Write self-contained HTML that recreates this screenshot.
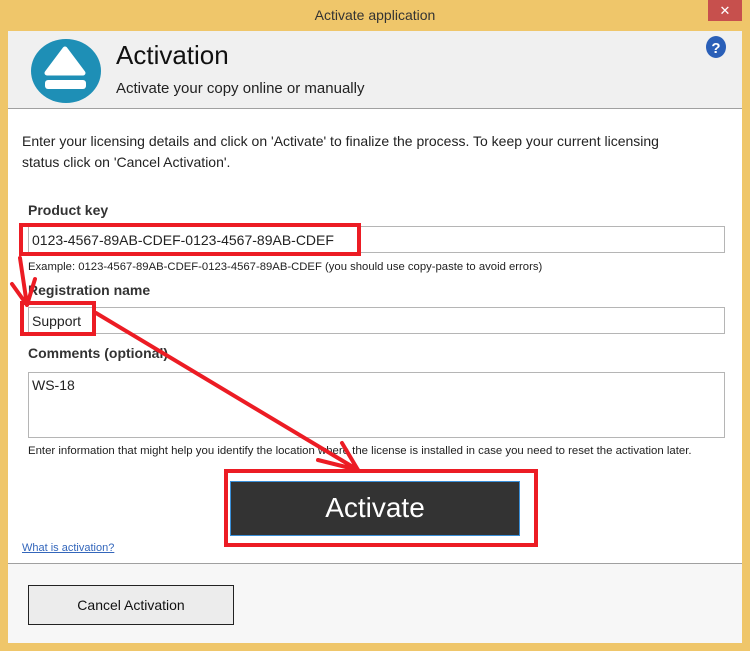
<!DOCTYPE html>
<html><head><style>
*{margin:0;padding:0;box-sizing:border-box}
body{width:750px;height:651px;background:#efc66a;font-family:"Liberation Sans",sans-serif;position:relative;overflow:hidden;color:#222}
.a{position:absolute}
.field{position:absolute;background:#fff;border:1px solid #b5b5b5;font-size:14px;padding-left:3px}
.lbl{position:absolute;font-size:14px;font-weight:bold;color:#333}
.small{position:absolute;font-size:11.3px;color:#222;white-space:nowrap}
.red{position:absolute;border:4px solid #ec1c24}
</style></head><body>
<div class="a" style="left:0;top:0;width:750px;height:30px;text-align:center;line-height:30px;font-size:14px;color:#333">Activate application</div>
<div class="a" style="left:708px;top:0;width:34px;height:21px;background:#c7504d;color:#fff;text-align:center;font-size:13px;line-height:21px">✕</div>
<div class="a" style="left:8px;top:31px;width:734px;height:612px;background:#fff"></div>
<div class="a" style="left:8px;top:31px;width:734px;height:78px;background:#f0f0f0;border-bottom:1px solid #a0a0a0"></div>
<svg class="a" style="left:0;top:30px" width="110" height="80"><ellipse cx="66" cy="41" rx="35" ry="32" fill="#1e8fb6"/><path d="M65 19 L83 43 L47 43 Z" fill="#fff" stroke="#fff" stroke-width="5" stroke-linejoin="round"/><rect x="45" y="50" width="41" height="9" rx="3" fill="#fff"/></svg>
<div class="a" style="left:116px;top:40px;font-size:26px;color:#111">Activation</div>
<div class="a" style="left:116px;top:80px;font-size:15px;color:#222">Activate your copy online or manually</div>
<svg class="a" style="left:705px;top:35px" width="22" height="24"><ellipse cx="11" cy="12" rx="10" ry="11" fill="#2a5fb8"/><text x="11" y="18" text-anchor="middle" font-family="Liberation Sans" font-weight="bold" font-size="15" fill="#fff">?</text></svg>
<div class="a" style="left:22px;top:131px;font-size:14px;line-height:21px;width:650px;color:#222">Enter your licensing details and click on 'Activate' to finalize the process. To keep your current licensing status click on 'Cancel Activation'.</div>
<div class="lbl" style="left:28px;top:202px">Product key</div>
<div class="field" style="left:28px;top:226px;width:697px;height:27px;line-height:26px">0123-4567-89AB-CDEF-0123-4567-89AB-CDEF</div>
<div class="small" style="left:28px;top:261px">Example: 0123-4567-89AB-CDEF-0123-4567-89AB-CDEF (you should use copy-paste to avoid errors)</div>
<div class="lbl" style="left:28px;top:282px">Registration name</div>
<div class="field" style="left:28px;top:307px;width:697px;height:27px;line-height:26px">Support</div>
<div class="lbl" style="left:28px;top:345px">Comments (optional)</div>
<div class="field" style="left:28px;top:372px;width:697px;height:66px;padding-top:4px">WS-18</div>
<div class="small" style="left:28px;top:445px;font-size:11.4px">Enter information that might help you identify the location where the license is installed in case you need to reset the activation later.</div>
<div class="a" style="left:230px;top:481px;width:290px;height:55px;background:#333;border:1px solid #3a8fd8;color:#fff;font-size:28px;text-align:center;line-height:52px">Activate</div>
<div class="a" style="left:22px;top:542px;font-size:11px;color:#3366bb;text-decoration:underline">What is activation?</div>
<div class="a" style="left:8px;top:563px;width:734px;height:80px;background:#f7f7f7;border-top:1px solid #a0a0a0"></div>
<div class="a" style="left:28px;top:585px;width:206px;height:40px;background:#ececec;border:1px solid #222;font-size:14px;text-align:center;line-height:38px;color:#111">Cancel Activation</div>
<div class="red" style="left:19px;top:223px;width:342px;height:33px"></div>
<div class="red" style="left:20px;top:301px;width:76px;height:35px"></div>
<div class="red" style="left:224px;top:469px;width:314px;height:78px"></div>
<svg class="a" style="left:0;top:0" width="750" height="651"><g stroke="#ec1c24" stroke-width="4" fill="none" stroke-linecap="round">
<path d="M20 258 L27 305 M12 284 L27 305 M35 279 L27 305"/>
<path d="M96 313 L358 470 M342 443 L358 470 M318 460 L358 470"/>
</g></svg>
</body></html>
